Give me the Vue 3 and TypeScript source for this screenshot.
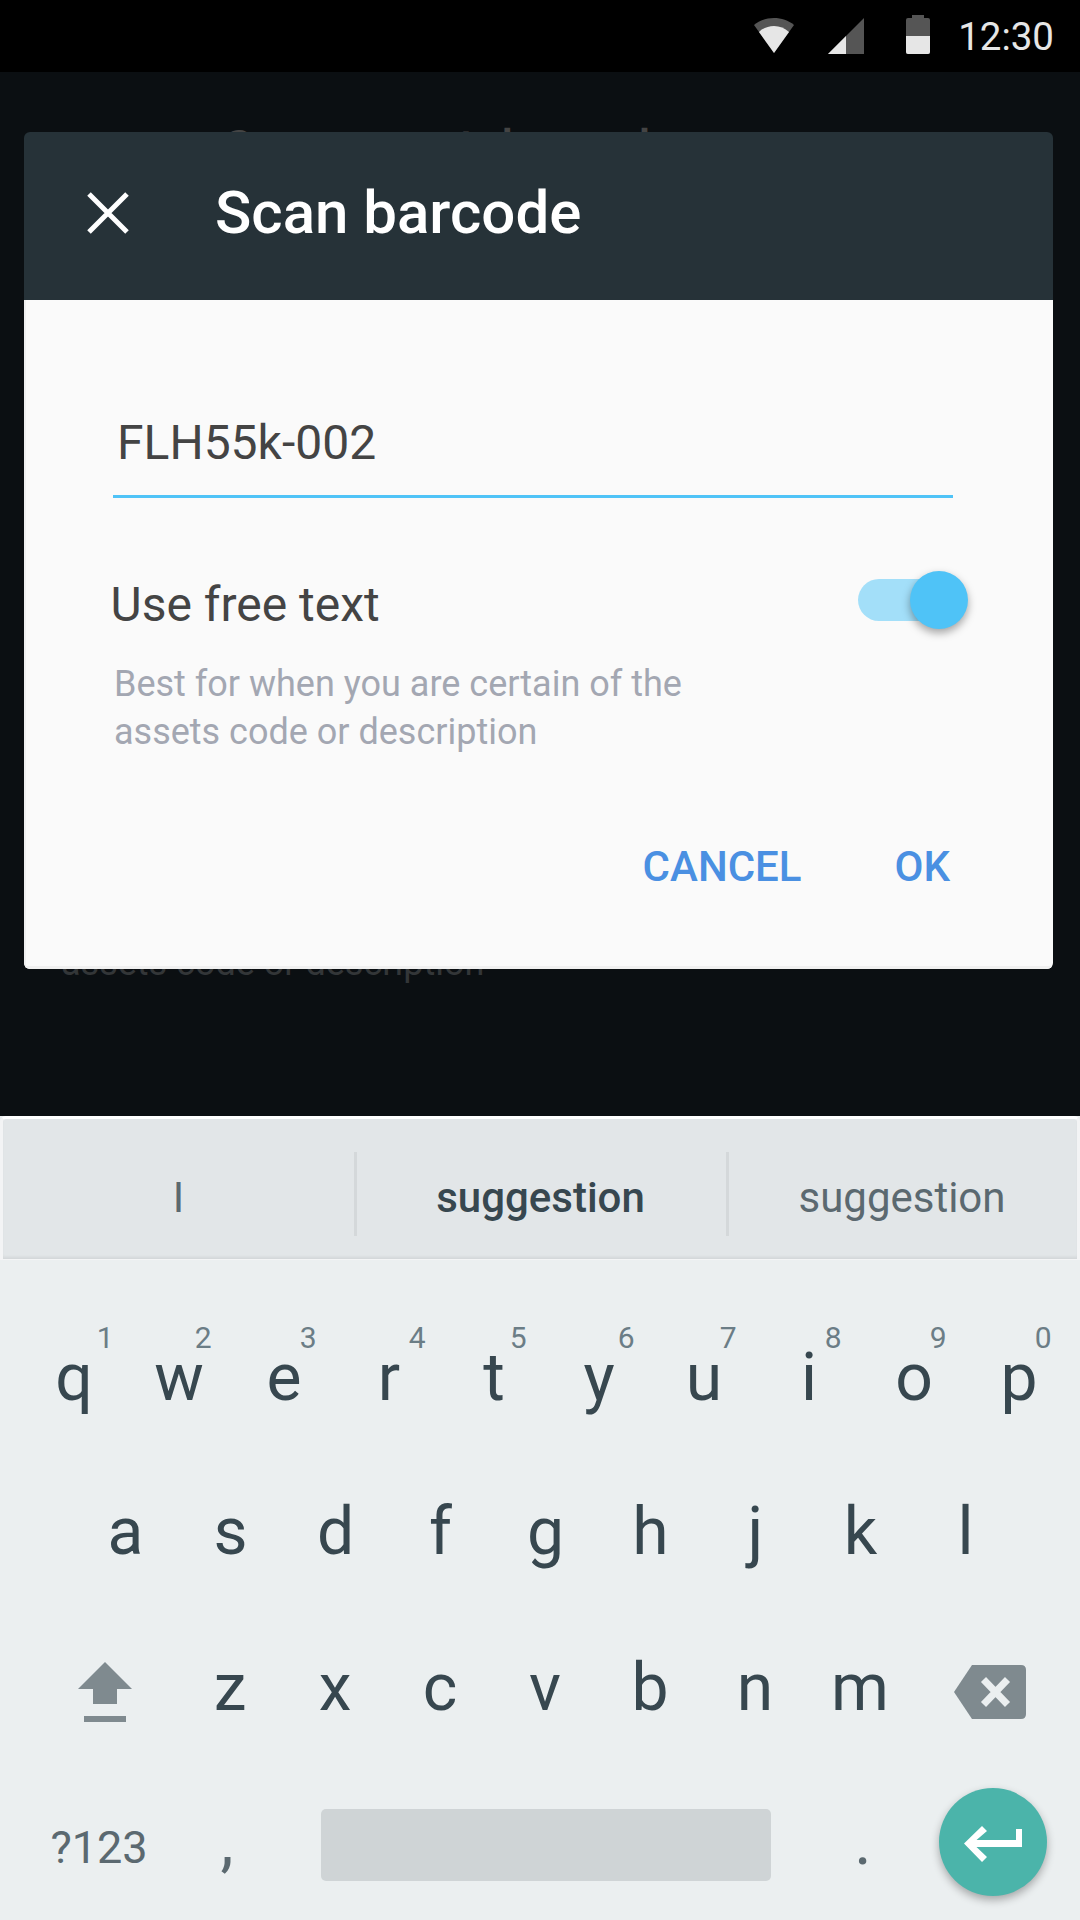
<script setup lang="ts">
const row1 = [
  { k: 'q', n: '1', dx: 7 }, { k: 'w', n: '2', dx: 0 }, { k: 'e', n: '3', dx: 0 }, { k: 'r', n: '4', dx: 4 }, { k: 't', n: '5', dx: 0 },
  { k: 'y', n: '6', dx: 3 }, { k: 'u', n: '7', dx: 0 }, { k: 'i', n: '8', dx: 0 }, { k: 'o', n: '9', dx: 0 }, { k: 'p', n: '0', dx: 0 },
]
const row2 = ['a', 's', 'd', 'f', 'g', 'h', 'j', 'k', 'l']
const row3 = ['z', 'x', 'c', 'v', 'b', 'n', 'm']
</script>

<template>
  <div class="page">
    <header class="status">
      <svg class="ic-wifi" width="40" height="35" viewBox="0 0 40 35">
        <path d="M0 7C11-2.3 29-2.3 40 7L20 35Z" fill="#555" />
        <path d="M5 14C13 6 27 6 35 14L20 35Z" fill="#e6e6e6" />
      </svg>
      <svg class="ic-signal" width="36" height="36" viewBox="0 0 36 36">
        <path d="M36 0V36H0Z" fill="#555" />
        <path d="M18 18V36H0Z" fill="#e6e6e6" />
      </svg>
      <svg class="ic-batt" width="24" height="39" viewBox="0 0 24 39">
        <path d="M6 0H18V3H22Q24 3 24 5V37Q24 39 22 39H2Q0 39 0 37V5Q0 3 2 3H6Z" fill="#555" />
        <path d="M0 21H24V37Q24 39 22 39H2Q0 39 0 37Z" fill="#e6e6e6" />
      </svg>
      <span class="clock">12:30</span>
    </header>

    <main class="stage">
      <div class="behind behind-title">Scan asset barcode</div>
      <div class="behind behind-desc">assets code or description</div>
      <section class="dialog">
        <div class="dialog-bar">
          <svg class="close" width="42" height="42" viewBox="0 0 42 42">
            <path d="M2 2L40 40M40 2L2 40" stroke="#fff" stroke-width="5" fill="none" />
          </svg>
          <h1 class="dialog-title">Scan barcode</h1>
        </div>
        <div class="dialog-body">
          <div class="field">FLH55k-002</div>
          <div class="toggle-row">
            <span class="toggle-label">Use free text</span>
            <span class="switch"><span class="track"></span><span class="thumb"></span></span>
          </div>
          <p class="hint">Best for when you are certain of the<br />assets code or description</p>
          <div class="actions">
            <span class="btn">CANCEL</span>
            <span class="btn">OK</span>
          </div>
        </div>
      </section>
    </main>

    <section class="keyboard">
      <div class="strip">
        <span class="sug sug-1">I</span>
        <i class="sep"></i>
        <span class="sug sug-2">suggestion</span>
        <i class="sep"></i>
        <span class="sug sug-3">suggestion</span>
      </div>
      <div class="keys">
        <div class="row r1">
          <span v-for="c in row1" :key="c.k" class="key">{{ c.k }}<sup class="num" :style="{ marginRight: -c.dx + 'px' }">{{ c.n }}</sup></span>
        </div>
        <div class="row r2">
          <span v-for="c in row2" :key="c" class="key">{{ c }}</span>
        </div>
        <div class="row r3">
          <span class="key icon shift">
            <svg width="54" height="60" viewBox="0 0 54 60">
              <path d="M27 0L54 27H39V42H15V27H0Z" fill="#7f8a8f" />
              <rect x="6" y="54" width="42" height="6" fill="#7f8a8f" />
            </svg>
          </span>
          <span v-for="c in row3" :key="c" class="key">{{ c }}</span>
          <span class="key icon del">
            <svg width="72" height="54" viewBox="0 0 72 54">
              <path d="M18 0H67Q72 0 72 5V49Q72 54 67 54H18L0 27Z" fill="#7f8a8f" />
              <path d="M29.5 14.5L53.5 39.5M53.5 14.5L29.5 39.5" stroke="#ebeff0" stroke-width="7" fill="none" />
            </svg>
          </span>
        </div>
        <div class="row r4">
          <span class="sym">?123</span>
          <span class="punct comma">,</span>
          <span class="space"></span>
          <span class="punct dot">.</span>
          <span class="enter">
            <svg width="58" height="36" viewBox="0 0 58 36">
              <path d="M0 17.5L18 0L23 5L12.5 14H52V3H58V21H12.5L23 31L18 36Z" fill="#fff" />
            </svg>
          </span>
        </div>
      </div>
    </section>
  </div>
</template>

<style>
html, body { margin: 0; background: #0b0f12; }
</style>

<style scoped>
.page {
  width: 1080px;
  height: 1920px;
  display: flex;
  flex-direction: column;
  overflow: hidden;
  background: #0b0f12;
  font-family: Roboto, "Liberation Sans", sans-serif;
}
.status {
  height: 72px;
  flex: none;
  background: #000;
  display: flex;
  align-items: center;
  justify-content: flex-end;
  padding-right: 26px;
  box-sizing: border-box;
}
.ic-wifi { margin-right: 34px; margin-top: -1px; }
.ic-signal { margin-right: 42px; }
.ic-batt { margin-right: 28px; margin-top: -3px; }
.clock { color: #e6e6e6; font-size: 38.5px; }
.stage {
  flex: 1;
  position: relative;
  padding: 60px 27px 0 24px;
}
.behind { position: absolute; white-space: nowrap; }
.behind-title {
  left: 224px;
  top: 48px;
  font-size: 48px;
  font-weight: 500;
  line-height: 56px;
  word-spacing: 15px;
  color: #444;
}
.behind-desc { left: 61px; top: 866px; font-size: 36px; line-height: 50px; color: #333638; }
.dialog {
  position: relative;
  border-radius: 6px;
  overflow: hidden;
  height: 837px;
}
.dialog-bar {
  height: 168px;
  box-sizing: border-box;
  padding-bottom: 7px;
  background: #263238;
  display: flex;
  align-items: center;
}
.close { margin-left: 63px; }
.dialog-title {
  margin: 0 0 0 86px;
  color: #fff;
  font-size: 60px;
  font-weight: 500;
}
.dialog-body {
  height: 669px;
  box-sizing: border-box;
  padding: 0 85px 0 89px;
  background: #fafafa;
  box-shadow: inset 0 -3px 0 #f0f0f0, inset 2px 0 0 #f0f0f0;
  overflow: hidden;
}
.field {
  margin-top: 100px;
  height: 98px;
  line-height: 70px;
  box-sizing: border-box;
  padding: 8px 0 0 4px;
  font-size: 48px;
  color: #444;
  border-bottom: 3px solid #4fc3f7;
  width: 840px;
}
.toggle-row {
  display: flex;
  justify-content: space-between;
  align-items: flex-start;
  margin-top: 73px;
  height: 58px;
}
.toggle-label {
  font-size: 48px;
  line-height: 58px;
  margin: 5px 0 0 -2.5px;
  color: #444;
}
.switch { position: relative; width: 110px; height: 58px; display: block; }
.track {
  position: absolute;
  left: 0;
  top: 8px;
  width: 84px;
  height: 42px;
  border-radius: 21px;
  background: #a3dff9;
}
.thumb {
  position: absolute;
  right: 0;
  top: 0;
  width: 58px;
  height: 58px;
  border-radius: 50%;
  background: #4fc3f7;
  box-shadow: 0 4px 8px rgba(0, 0, 0, 0.35);
}
.hint {
  margin: 31px 0 0 1px;
  font-size: 36px;
  line-height: 48px;
  color: #a3a7b2;
}
.actions {
  display: flex;
  justify-content: flex-end;
  gap: 93px;
  margin-top: 86px;
  padding-right: 18px;
  line-height: 50px;
}
.btn { font-size: 42px; font-weight: 500; color: #4a90e2; }
.keyboard {
  height: 804px;
  flex: none;
  background: #ebeff0;
  display: flex;
  flex-direction: column;
}
.strip {
  height: 144px;
  flex: none;
  box-sizing: border-box;
  padding-top: 10px;
  border-top: 3px solid #fff;
  border-bottom: 1px solid #f4f5f6;
  border-left: 3px solid #f3f4f5;
  border-right: 3px solid #f3f4f5;
  border-top-left-radius: 6px;
  border-top-right-radius: 6px;
  background: #e2e6e8;
  box-shadow: inset 0 -3px 3px -1px rgba(0, 0, 0, 0.07);
  display: flex;
  align-items: center;
}
.sug { text-align: center; font-size: 42px; color: #5b6970; margin-top: 6px; }
.sug-1 { width: 351px; }
.sug-2 { width: 369px; padding-right: 2px; box-sizing: border-box; font-weight: 500; color: #37474f; }
.sug-3 { flex: 1; padding-right: 2px; }
.sep { width: 3px; height: 84px; background: #d4d8da; flex: none; }
.keys { flex: 1; display: flex; flex-direction: column; }
.row { display: flex; height: 156px; align-items: center; justify-content: center; }
.key {
  position: relative;
  width: 105px;
  text-align: center;
  font-size: 66px;
  color: #37474f;
  line-height: 70px;
}
.icon { display: flex; justify-content: center; align-items: center; margin-top: 9px; }
.num {
  position: absolute;
  top: -22px;
  right: 20px;
  font-size: 30px;
  line-height: 34px;
  color: #6b7d86;
}
.r1 { margin-top: 40px; padding-left: 13px; }
.r2 { margin-top: -2.5px; padding-left: 11px; }
.r3 { justify-content: flex-start; padding-left: 52px; }
.shift { width: 106px; margin-right: 19.5px; }
.del { width: 154px; }
.r4 { position: relative; height: 158px; justify-content: flex-start; }
.sym { width: 198px; text-align: center; font-size: 45px; color: #5b6970; margin-top: 6px; }
.punct { text-align: center; font-size: 66px; color: #5b6970; margin-top: -6px; }
.comma { width: 58px; }
.space { width: 450px; height: 72px; margin-left: 65px; background: #cfd4d6; border-radius: 5px; }
.dot { width: 60px; margin-left: 62px; }
.enter {
  position: absolute;
  left: 939px;
  top: 22.5px;
  width: 108px;
  height: 108px;
  padding-top: 4px;
  box-sizing: border-box;
  border-radius: 50%;
  background: #4bb4aa;
  box-shadow: 0 4px 8px rgba(0, 0, 0, 0.3);
  display: flex;
  align-items: center;
  justify-content: center;
}
</style>
